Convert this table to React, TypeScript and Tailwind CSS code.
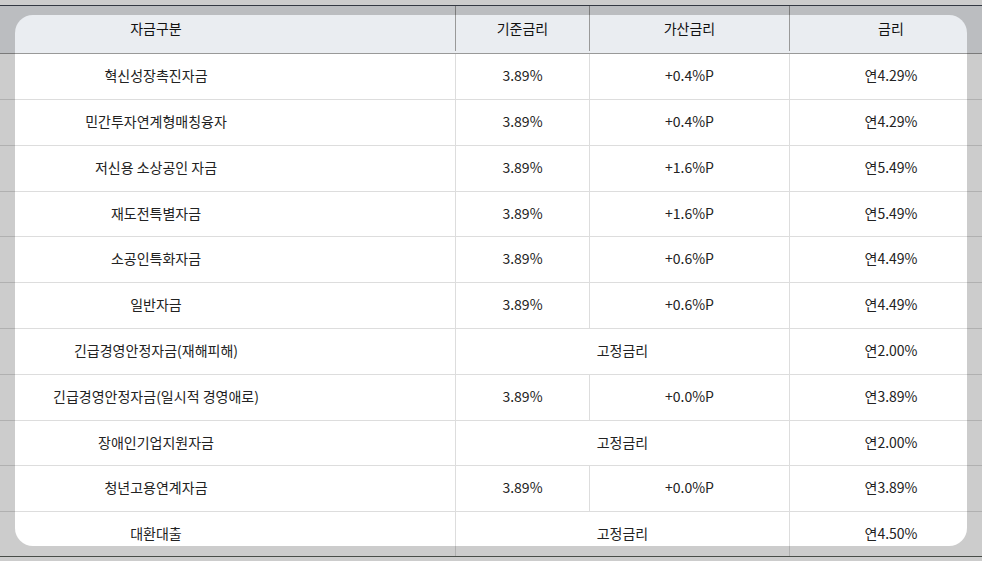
import React from 'react';

type Row = {
  name: string;
  base?: string;
  add?: string;
  rate: string;
  h: string;
};

const rows: Row[] = [
  { name: '혁신성장촉진자금', base: '3.89%', add: '+0.4%P', rate: '연4.29%', h: 'h-[46px]' },
  { name: '민간투자연계형매칭융자', base: '3.89%', add: '+0.4%P', rate: '연4.29%', h: 'h-[46px]' },
  { name: '저신용 소상공인 자금', base: '3.89%', add: '+1.6%P', rate: '연5.49%', h: 'h-[46px]' },
  { name: '재도전특별자금', base: '3.89%', add: '+1.6%P', rate: '연5.49%', h: 'h-[45px]' },
  { name: '소공인특화자금', base: '3.89%', add: '+0.6%P', rate: '연4.49%', h: 'h-[46px]' },
  { name: '일반자금', base: '3.89%', add: '+0.6%P', rate: '연4.49%', h: 'h-[46px]' },
  { name: '긴급경영안정자금(재해피해)', rate: '연2.00%', h: 'h-[46px]' },
  { name: '긴급경영안정자금(일시적 경영애로)', base: '3.89%', add: '+0.0%P', rate: '연3.89%', h: 'h-[46px]' },
  { name: '장애인기업지원자금', rate: '연2.00%', h: 'h-[45px]' },
  { name: '청년고용연계자금', base: '3.89%', add: '+0.0%P', rate: '연3.89%', h: 'h-[46px]' },
  { name: '대환대출', rate: '연4.50%', h: 'h-[45px]' },
];

export default function App() {
  return (
    <div
      className="relative w-[982px] h-[561px] overflow-hidden bg-white text-[14px] text-[#222]"
      style={{ fontFamily: '"Noto Sans CJK KR", "Noto Sans", sans-serif' }}
    >
      <div className="pt-[5px]">
        <div className="border-t border-[#404753]">
          {/* header */}
          <div className="flex h-[48px] pb-[2px] bg-[#eaedf1] border-b border-[#999] text-[#111]">
            <div className="w-[456px] pr-[143px] border-r border-[#999] flex items-center justify-center">자금구분</div>
            <div className="w-[134px] border-r border-[#999] flex items-center justify-center">기준금리</div>
            <div className="w-[200px] border-r border-[#999] flex items-center justify-center">가산금리</div>
            <div className="flex-1 pl-[10px] flex items-center justify-center">금리</div>
          </div>

          {rows.map((r, i) => (
            <div
              key={r.name}
              className={`flex ${r.h} border-b ${i === rows.length - 1 ? 'border-[#5a615a]' : 'border-[#ddd]'}`}
            >
              <div className="w-[456px] pr-[143px] pb-[2px] border-r border-[#ddd] flex items-center justify-center">{r.name}</div>
              {r.base ? (
                <>
                  <div className="w-[134px] pb-[2px] border-r border-[#ddd] flex items-center justify-center">{r.base}</div>
                  <div className="w-[200px] pb-[2px] border-r border-[#ddd] flex items-center justify-center">{r.add}</div>
                </>
              ) : (
                <div className="w-[334px] pb-[2px] border-r border-[#ddd] flex items-center justify-center">고정금리</div>
              )}
              <div className="flex-1 pl-[10px] pb-[2px] flex items-center justify-center">{r.rate}</div>
            </div>
          ))}
        </div>
      </div>

      {/* spotlight mask over the table */}
      <div className="pointer-events-none absolute left-[15px] top-[15px] w-[952px] h-[531px] rounded-[18px] shadow-[0_0_0_2000px_rgba(0,0,0,0.2)]" />
    </div>
  );
}
